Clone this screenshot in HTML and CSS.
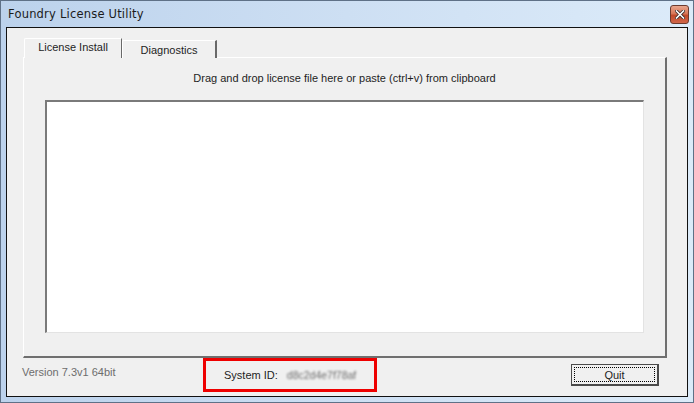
FILE: index.html
```html
<!DOCTYPE html>
<html lang="en">
<head>
    <meta charset="UTF-8">
    <title>Foundry License Utility</title>
    <link rel="stylesheet" href="styles.css">
</head>
<body>
    <div class="window">
        <div class="titlebar">
            <span class="title">Foundry License Utility</span>
            <button class="close" aria-label="Close">
                <svg width="10" height="9" viewBox="0 0 10 9">
                    <path d="M1.5 1 L8.5 8 M8.5 1 L1.5 8" stroke="#3a2a2a" stroke-width="3.2" stroke-linecap="square"/>
                    <path d="M1.5 1 L8.5 8 M8.5 1 L1.5 8" stroke="#ffffff" stroke-width="1.6" stroke-linecap="square"/>
                </svg>
            </button>
        </div>
        <div class="client">
            <div class="tabs">
                <div class="tab active">License Install</div>
                <div class="tab">Diagnostics</div>
            </div>
            <div class="panel">
                <p class="hint">Drag and drop license file here or paste (ctrl+v) from clipboard</p>
                <div class="dropbox"></div>
            </div>
            <div class="status">
                <span class="version">Version 7.3v1 64bit</span>
                <div class="sysid">
                    <span>System ID:</span>
                    <span class="blurred">d8c2d4e7f78af</span>
                </div>
                <button class="quit"><span>Quit</span></button>
            </div>
        </div>
    </div>
</body>
</html>
```

FILE: styles.css
```css
* {
    box-sizing: border-box;
}

body {
    margin: 0;
    font-family: "Liberation Sans", Arial, sans-serif;
    font-size: 11px;
    color: #1e1e1e;
}

.window {
    width: 694px;
    height: 403px;
    display: flex;
    flex-direction: column;
    border: 1px solid #5f7187;
    padding: 0 5px 5px;
    background: linear-gradient(90deg, #bcd2ec 0%, #cddff3 50%, #dcebf9 100%);
}

.titlebar {
    height: 26px;
    display: flex;
    align-items: center;
    justify-content: space-between;
    padding: 0 0 1px 2px;
}

.title {
    color: #1b1b1b;
    font-family: "DejaVu Sans", sans-serif;
    font-size: 11.5px;
    letter-spacing: 0.2px;
}

.close {
    width: 19px;
    height: 19px;
    margin: 2px -1px 0 0;
    padding: 0;
    border: 1px solid #6b3b2f;
    border-radius: 3px;
    background: linear-gradient(#e9a68d 0%, #d77759 45%, #c24a2b 55%, #d0664a 100%);
    display: flex;
    align-items: center;
    justify-content: center;
}

.client {
    flex: 1;
    display: flex;
    flex-direction: column;
    border: 1px solid #111;
    background-color: #f0f0f0;
    padding: 10px 20px 0 16px;
}

.tabs {
    display: flex;
    align-items: flex-end;
    padding-left: 1px;
    height: 20px;
    margin-bottom: -1px;
    position: relative;
    z-index: 1;
}

.tab {
    height: 18px;
    width: 95px;
    padding: 0;
    white-space: nowrap;
    display: flex;
    align-items: center;
    justify-content: center;
    border-top: 1px solid #ffffff;
    border-left: 1px solid #ffffff;
    border-right: 2px solid #696969;
    border-top-left-radius: 2px;
    background-color: #f0f0f0;
}

.tab.active {
    height: 20px;
    width: 98px;
    border-right: 1px solid #696969;
    padding-bottom: 3px;
}

.panel {
    height: 301px;
    border-top: 1px solid #ffffff;
    border-left: 1px solid #ffffff;
    border-right: 2px solid #6f6f6f;
    border-bottom: 2px solid #6f6f6f;
    padding: 14px 21px 0 21px;
}

.hint {
    margin: 0;
    text-align: center;
    height: 28px;
}

.dropbox {
    height: 233px;
    background-color: #ffffff;
    border-top: 2px solid #7a7a7a;
    border-left: 2px solid #7a7a7a;
    border-right: 1px solid #e3e3e3;
    border-bottom: 1px solid #e3e3e3;
}

.status {
    flex: 1;
    display: flex;
    align-items: flex-start;
}

.version {
    color: #6d6d6d;
    margin: 8px 0 0 -1px;
    width: 181px;
}

.sysid {
    width: 174px;
    height: 34px;
    border: 3px solid #ee0000;
    display: flex;
    align-items: center;
    padding: 0 0 1px 18px;
    gap: 9px;
}

.blurred {
    color: #6a6a6a;
    filter: blur(1.3px);
    font-size: 10.5px;
}

.quit {
    margin: 6px 0 0 194px;
    width: 88px;
    height: 22px;
    padding: 2px;
    border: 1px solid #4a4a4a;
    border-right-width: 2px;
    border-bottom-width: 2px;
    background-color: #f0f0f0;
    font-family: inherit;
    font-size: 11px;
    color: #1e1e1e;
}

.quit span {
    display: block;
    height: 100%;
    border: 1px dotted #000;
    line-height: 14px;
}
```
